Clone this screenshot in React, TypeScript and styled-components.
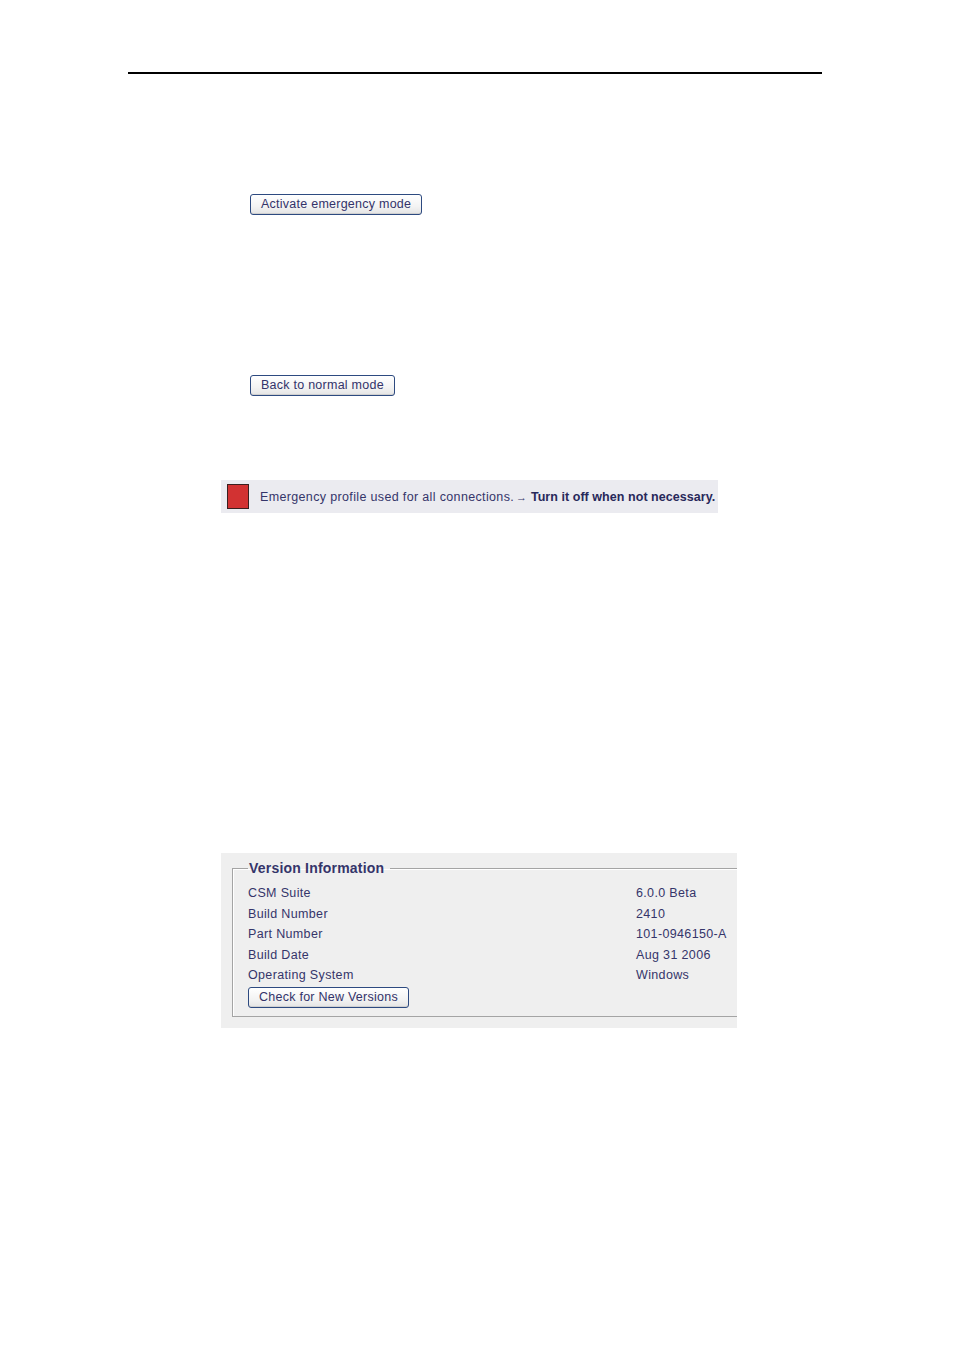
import React from "react"
import styled, { createGlobalStyle } from "styled-components"

const GlobalStyle = createGlobalStyle`
    html, body {
        margin: 0;
        padding: 0;
        background: #fff;
    }
    body {
        font-family: "Liberation Sans", Arial, sans-serif;
    }
`

const Page = styled.div`
    width: 954px;
    height: 1350px;
    padding-top: 72px;
    box-sizing: border-box;
`

const HeaderRule = styled.hr`
    margin: 0 0 0 128px;
    width: 694px;
    height: 2px;
    border: none;
    background: #000;
`

const ButtonRow = styled.div<{ $top: number, $left?: number }>`
    margin-top: ${p => p.$top}px;
    padding-left: ${p => p.$left ?? 250}px;
    display: flex;
`

const Button = styled.button`
    height: 21px;
    padding: 0 10px;
    font-family: "Liberation Sans", Arial, sans-serif;
    font-size: 12.5px;
    letter-spacing: 0.25px;
    color: #33336a;
    background: linear-gradient(#ffffff, #f3f3f3 60%, #e4e4e4);
    border: 1px solid #2d4a80;
    border-radius: 3px;
    box-shadow: inset 0 -1px 0 #d0d0d0;
    line-height: 19px;
    cursor: pointer;
`

const Banner = styled.div`
    margin: 84px 0 0 221px;
    width: 497px;
    height: 33px;
    background: #ebebf0;
    display: flex;
    align-items: center;
    padding-left: 6px;
    box-sizing: border-box;
    gap: 11px;
`

const StatusSquare = styled.span`
    width: 22px;
    height: 25px;
    box-sizing: border-box;
    background: #d23232;
    border: 1px solid #3a2020;
    flex-shrink: 0;
`

const BannerText = styled.span`
    font-size: 12.5px;
    letter-spacing: 0.35px;
    color: #35356a;
    white-space: nowrap;
    strong {
        color: #28285a;
        letter-spacing: 0.05px;
    }
`

const Arrow = styled.span`
    font-size: 11px;
    letter-spacing: 0;
    margin: 0 4px 0 -2px;
`

const Panel = styled.div`
    margin: 340px 0 0 221px;
    width: 516px;
    height: 175px;
    background: #efefef;
    padding: 7px 0 0 11px;
    box-sizing: border-box;
    overflow: hidden;
`

const Fieldset = styled.fieldset`
    margin: 0;
    padding: 0 0 6px 15px;
    border: 1px solid #a4a4a4;
    border-right: none;
    box-shadow: inset 1px 1px 0 #fff;
    height: 157px;
    box-sizing: border-box;
    min-width: 0;
`

const Legend = styled.legend`
    padding: 0 6px 0 1px;
    margin-left: 0;
    font-size: 14px;
    font-weight: bold;
    color: #35356a;
    letter-spacing: 0.2px;
`

const InfoGrid = styled.div`
    display: grid;
    grid-template-columns: 388px auto;
    font-size: 12.5px;
    letter-spacing: 0.35px;
    color: #35356a;
    line-height: 20.5px;
    margin-top: 7px;
`

const InfoLabel = styled.div``

const InfoValue = styled.div``

const FieldsetButtons = styled.div`
    margin-top: 1px;
    display: flex;
`

const versionRows: Array<[string, string]> = [
    ["CSM Suite", "6.0.0 Beta"],
    ["Build Number", "2410"],
    ["Part Number", "101-0946150-A"],
    ["Build Date", "Aug 31 2006"],
    ["Operating System", "Windows"],
]

export default function App() {
    return (
        <>
            <GlobalStyle />
            <Page>
                <HeaderRule />
                <ButtonRow $top={120}>
                    <Button>Activate emergency mode</Button>
                </ButtonRow>
                <ButtonRow $top={160}>
                    <Button>Back to normal mode</Button>
                </ButtonRow>
                <Banner>
                    <StatusSquare />
                    <BannerText>
                        Emergency profile used for all connections. <Arrow>→</Arrow><strong>Turn it off when not necessary.</strong>
                    </BannerText>
                </Banner>
                <Panel>
                    <Fieldset>
                        <Legend>Version Information</Legend>
                        <InfoGrid>
                            {versionRows.map(([label, value]) => (
                                <React.Fragment key={label}>
                                    <InfoLabel>{label}</InfoLabel>
                                    <InfoValue>{value}</InfoValue>
                                </React.Fragment>
                            ))}
                        </InfoGrid>
                        <FieldsetButtons>
                            <Button>Check for New Versions</Button>
                        </FieldsetButtons>
                    </Fieldset>
                </Panel>
            </Page>
        </>
    )
}
